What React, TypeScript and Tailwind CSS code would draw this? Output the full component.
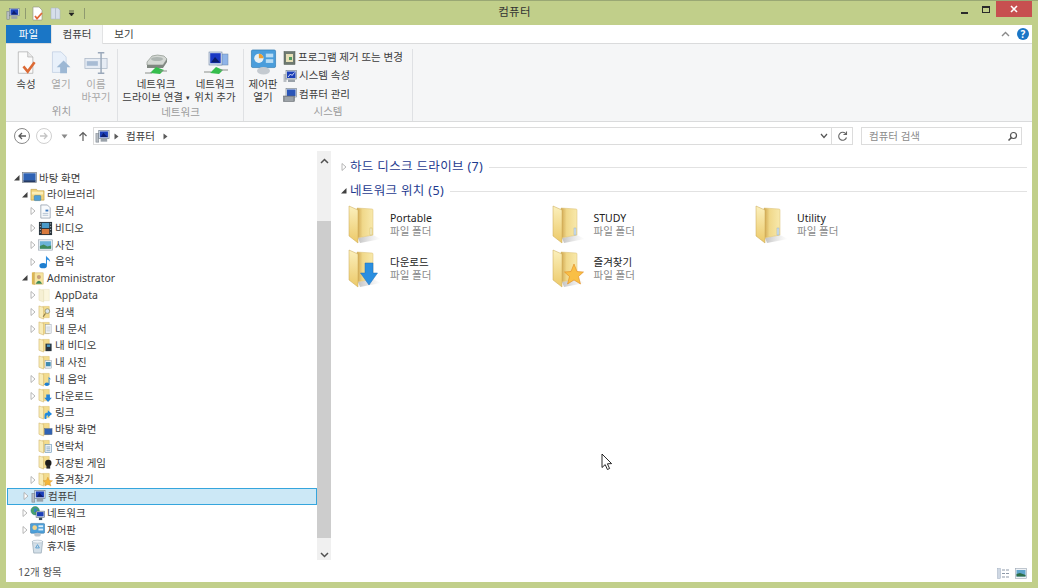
import React from 'react';

const FONT = "font-['Noto_Sans','Noto_Sans_CJK_KR',sans-serif]";

function Pc({ size = 16 }: { size?: number }) {
  return (
    <svg width={size} height={size} viewBox="0 0 16 16">
      <rect x="1" y="5" width="3" height="9" fill="#b9bec4" stroke="#77808a" strokeWidth="0.6" />
      <rect x="4" y="1.5" width="11" height="8.5" fill="#dfe6ee" stroke="#6d7a88" strokeWidth="0.7" />
      <rect x="5.2" y="2.6" width="8.6" height="6.3" fill="#1b3fb8" />
      <path d="M6 8.5 L9 4 L11 6.5 L13.5 8.5Z" fill="#0d1f70" />
      <rect x="6" y="10.5" width="7" height="3" fill="#9aa2aa" />
    </svg>
  );
}

function Desktop() {
  return (
    <svg width="16" height="16" viewBox="0 0 16 16">
      <rect x="0.5" y="2.5" width="15" height="11" fill="#dfe5ec" stroke="#6b7480" strokeWidth="0.7" />
      <rect x="1.5" y="3.5" width="13" height="8" fill="#2f62b4" />
      <rect x="1.5" y="11" width="13" height="1.8" fill="#243a66" />
    </svg>
  );
}

// small yellow folder, optional overlay glyph in the bottom right
function SmallFolder({ children, pale = false }: { children?: React.ReactNode; pale?: boolean }) {
  return (
    <svg width="16" height="16" viewBox="0 0 16 16">
      <path d="M5 1.5 H12 V13.5 H5Z" fill={pale ? '#fbf6de' : '#f3dc8e'} stroke={pale ? '#e8e0c0' : '#d8bb6a'} strokeWidth="0.5" />
      <path d="M1 1 L6 2.5 L6 15 L1 13Z" fill={pale ? '#f6f0d4' : '#f8ecb8'} stroke={pale ? '#e0d8b0' : '#c9a752'} strokeWidth="0.5" />
      {children}
    </svg>
  );
}

function LargeFolder({ children }: { children?: React.ReactNode }) {
  return (
    <svg width="36" height="40" viewBox="0 0 36 40">
      <defs>
        <linearGradient id="fold-back" x1="0" y1="0" x2="1" y2="0">
          <stop offset="0" stopColor="#cfa54e" />
          <stop offset="0.35" stopColor="#f0d88a" />
          <stop offset="1" stopColor="#f8e9ac" />
        </linearGradient>
        <linearGradient id="fold-front" x1="0" y1="0" x2="0" y2="1">
          <stop offset="0" stopColor="#fbf0bd" />
          <stop offset="1" stopColor="#ecc968" />
        </linearGradient>
        <linearGradient id="fold-shadow" x1="0" y1="0" x2="1" y2="0">
          <stop offset="0" stopColor="#a8a8a8" stopOpacity="0.7" />
          <stop offset="1" stopColor="#c8c8c8" stopOpacity="0" />
        </linearGradient>
      </defs>
      <path d="M10 33 L25 30 L33 34 L12 38Z" fill="url(#fold-shadow)" />
      <path d="M9 3 L24 4 Q25 4 25 5 L25 30 L9 33Z" fill="url(#fold-back)" stroke="#d8bd70" strokeWidth="0.5" />
      <path d="M1 1 L10 5 L10 38 L1 31Z" fill="url(#fold-front)" stroke="#c9a752" strokeWidth="0.5" />
      {children}
    </svg>
  );
}

function Expander({ state }: { state: 'open' | 'closed' | 'none' }) {
  if (state === 'none') return <span className="w-[8px] shrink-0" />;
  return (
    <svg width="8" height="10" viewBox="0 0 8 10" className="shrink-0">
      {state === 'open' ? (
        <path d="M6.5 2 V7.5 H1Z" fill="#404040" />
      ) : (
        <path d="M2 1.5 L6 5 L2 8.5Z" fill="#fff" stroke="#a6a6a6" strokeWidth="0.8" />
      )}
    </svg>
  );
}

const smallIcons: Record<string, React.ReactNode> = {
  desktop: <Desktop />,
  library: (
    <svg width="16" height="16" viewBox="0 0 16 16">
      <path d="M1 2.5 H7 L8 4 H15 V14 H1Z" fill="#f0d27a" stroke="#b8953c" strokeWidth="0.6" />
      <rect x="2" y="5" width="12" height="3" fill="#fbeeb8" />
      <rect x="4.5" y="9" width="7" height="5.5" rx="1" fill="#4f9fd8" stroke="#2f75a8" strokeWidth="0.5" />
    </svg>
  ),
  doc: (
    <svg width="16" height="16" viewBox="0 0 16 16">
      <path d="M3 1 H10 L13 4 V15 H3Z" fill="#f8fafc" stroke="#8d99a8" strokeWidth="0.8" />
      <rect x="8" y="6" width="3" height="2" fill="#3a78c0" />
      <path d="M5 10 H11 M5 12 H11" stroke="#9fb0c4" strokeWidth="0.8" />
    </svg>
  ),
  video: (
    <svg width="16" height="16" viewBox="0 0 16 16">
      <rect x="1" y="1" width="14" height="14" fill="#27323a" />
      <rect x="4" y="2" width="8" height="5.5" fill="#4a9ac8" />
      <rect x="4" y="8.5" width="8" height="5.5" fill="#d8793c" />
      <path d="M2 3 H3 M2 6 H3 M2 9 H3 M2 12 H3 M13 3 H14 M13 6 H14 M13 9 H14 M13 12 H14" stroke="#d0d8dc" strokeWidth="1" />
    </svg>
  ),
  photo: (
    <svg width="16" height="16" viewBox="0 0 16 16">
      <rect x="0.5" y="3" width="15" height="11" fill="#eef2f6" stroke="#9aa6b2" strokeWidth="0.7" />
      <rect x="2" y="4.5" width="12" height="8" fill="#6bb2d8" />
      <path d="M2 12.5 V9.5 L6 8 L10 10 L14 9 V12.5Z" fill="#3f8a5a" />
    </svg>
  ),
  music: (
    <svg width="16" height="16" viewBox="0 0 16 16">
      <ellipse cx="5.5" cy="12.5" rx="4" ry="2.8" fill="#1f7fd0" />
      <path d="M8.5 12.5 V1.5 C9.5 4 13 4.5 13 8.5 C12 6.5 10.5 6 9.6 6 V12.5Z" fill="#2c8de0" />
    </svg>
  ),
  admin: (
    <svg width="16" height="16" viewBox="0 0 16 16">
      <path d="M2 1.5 L5 1 V15 L2 14Z" fill="#dcb654" />
      <rect x="5" y="2" width="9" height="12" fill="#f6e5a0" stroke="#c9a752" strokeWidth="0.5" />
      <circle cx="9.5" cy="6.5" r="2.2" fill="#c8a07a" />
      <path d="M6 13.5 Q9.5 7.5 13 13.5Z" fill="#3f8a5a" />
    </svg>
  ),
  appdata: <SmallFolder pale />,
  search: <SmallFolder><circle cx="10" cy="6.5" r="2.5" fill="#dbe6ee" stroke="#8c8c6a" strokeWidth="0.8" /><path d="M8 9 L5.5 12.5" stroke="#8c7a4a" strokeWidth="1.2" /></SmallFolder>,
  mydoc: <SmallFolder><rect x="8" y="4" width="6" height="9" fill="#f4f6f8" stroke="#8d99a8" strokeWidth="0.5" /><path d="M9 6.5 H13 M9 8.5 H13 M9 10.5 H13" stroke="#9fb0c4" strokeWidth="0.6" /></SmallFolder>,
  myvideo: <SmallFolder><rect x="8" y="6" width="6.5" height="8" fill="#27323a" /><rect x="9.5" y="7" width="3.5" height="2.5" fill="#4a9ac8" /></SmallFolder>,
  myphoto: <SmallFolder><rect x="7.5" y="6" width="7" height="8" fill="#eef2f6" stroke="#8d99a8" strokeWidth="0.5" /><rect x="8.5" y="7.5" width="5" height="4.5" fill="#3f8ab0" /></SmallFolder>,
  mymusic: <SmallFolder><ellipse cx="9.5" cy="13" rx="2.5" ry="1.8" fill="#1f7fd0" /><path d="M11.3 13 V5 L14 8 L12.2 7.5 V13Z" fill="#2c8de0" /></SmallFolder>,
  download: <SmallFolder><path d="M8.8 7 H12.7 V10.5 H14.8 L10.7 15 L6.6 10.5 H8.8Z" fill="#2384da" /></SmallFolder>,
  link: <SmallFolder><path d="M7 15 V11 Q7 8 10.5 8 V5.5 L15 9.5 L10.5 13 V10.8 Q9 10.8 9 12 V15Z" fill="#1f8ae0" /></SmallFolder>,
  dtfolder: <SmallFolder><rect x="7" y="7" width="8" height="6.5" fill="#2f62b4" stroke="#5a6a80" strokeWidth="0.5" /></SmallFolder>,
  contact: <SmallFolder><rect x="7.5" y="6" width="7" height="8.5" fill="#eef3f8" stroke="#5a8ab0" strokeWidth="0.6" /><path d="M9 8.5 H13 M9 10.5 H13 M9 12.5 H13" stroke="#5a8ab0" strokeWidth="0.7" /></SmallFolder>,
  game: <SmallFolder><circle cx="11" cy="8.5" r="3.4" fill="#1c1c1c" /><rect x="9" y="11" width="4" height="3.5" fill="#2a2a2a" /></SmallFolder>,
  fav: <SmallFolder><path d="M10.5 5.5 L12 9 L15.5 9.3 L12.8 11.5 L13.8 15 L10.5 13 L7.2 15 L8.2 11.5 L5.5 9.3 L9 9Z" fill="#f5b63a" stroke="#d08a20" strokeWidth="0.4" /></SmallFolder>,
  pc: <Pc />,
  network: (
    <svg width="16" height="16" viewBox="0 0 16 16">
      <circle cx="5.5" cy="5" r="4.5" fill="#48a36a" stroke="#2d7a8c" strokeWidth="0.5" />
      <path d="M3 2.5 Q6 3.5 4 6.5 Q7 7 8 3" fill="#2f7ed0" />
      <rect x="6.5" y="5.5" width="9" height="6.5" fill="#dfe6ee" stroke="#4a5a6a" strokeWidth="0.6" />
      <rect x="7.5" y="6.5" width="7" height="4.5" fill="#1b3fb8" />
      <rect x="9.5" y="12.5" width="3.5" height="2.5" fill="#374a5c" />
    </svg>
  ),
  control: (
    <svg width="16" height="16" viewBox="0 0 16 16">
      <rect x="0.5" y="1.5" width="15" height="10.5" rx="1" fill="#4d9fd8" stroke="#3a78a8" strokeWidth="0.6" />
      <circle cx="5" cy="6" r="2.5" fill="#f2d48a" />
      <rect x="9" y="3.5" width="5" height="2" fill="#d9ecf8" />
      <rect x="9" y="7" width="5" height="2" fill="#d9ecf8" />
      <ellipse cx="8" cy="13.5" rx="3.5" ry="2" fill="#bcc4cc" />
    </svg>
  ),
  trash: (
    <svg width="16" height="16" viewBox="0 0 16 16">
      <path d="M2.5 2.5 H13.5 L12 15 H4Z" fill="#d3dfe8" stroke="#8fa2b0" strokeWidth="0.7" />
      <ellipse cx="8" cy="2.8" rx="5.5" ry="1.6" fill="#eef3f7" stroke="#8fa2b0" strokeWidth="0.5" />
      <path d="M8 6 L10 9.5 H6Z" fill="none" stroke="#5b9fd0" strokeWidth="1" />
    </svg>
  ),
};

const treeRows: { level: number; state: 'open' | 'closed' | 'none'; icon: string; label: string; selected?: boolean }[] = [
  { level: 0, state: 'open', icon: 'desktop', label: '바탕 화면' },
  { level: 1, state: 'open', icon: 'library', label: '라이브러리' },
  { level: 2, state: 'closed', icon: 'doc', label: '문서' },
  { level: 2, state: 'closed', icon: 'video', label: '비디오' },
  { level: 2, state: 'closed', icon: 'photo', label: '사진' },
  { level: 2, state: 'closed', icon: 'music', label: '음악' },
  { level: 1, state: 'open', icon: 'admin', label: 'Administrator' },
  { level: 2, state: 'closed', icon: 'appdata', label: 'AppData' },
  { level: 2, state: 'closed', icon: 'search', label: '검색' },
  { level: 2, state: 'closed', icon: 'mydoc', label: '내 문서' },
  { level: 2, state: 'none', icon: 'myvideo', label: '내 비디오' },
  { level: 2, state: 'none', icon: 'myphoto', label: '내 사진' },
  { level: 2, state: 'closed', icon: 'mymusic', label: '내 음악' },
  { level: 2, state: 'closed', icon: 'download', label: '다운로드' },
  { level: 2, state: 'none', icon: 'link', label: '링크' },
  { level: 2, state: 'none', icon: 'dtfolder', label: '바탕 화면' },
  { level: 2, state: 'none', icon: 'contact', label: '연락처' },
  { level: 2, state: 'none', icon: 'game', label: '저장된 게임' },
  { level: 2, state: 'closed', icon: 'fav', label: '즐겨찾기' },
  { level: 1, state: 'closed', icon: 'pc', label: '컴퓨터', selected: true },
  { level: 1, state: 'closed', icon: 'network', label: '네트워크' },
  { level: 1, state: 'closed', icon: 'control', label: '제어판' },
  { level: 1, state: 'none', icon: 'trash', label: '휴지통' },
];

const indent = ['pl-[7px]', 'pl-[15px]', 'pl-[23px]'];

const folders: { name: string; overlay?: React.ReactNode }[] = [
  { name: 'Portable', overlay: <rect x="22" y="23" width="2" height="7" fill="#f5f0d0" stroke="#c8b050" strokeWidth="0.4" /> },
  { name: 'STUDY', overlay: <rect x="22" y="23" width="2" height="7" fill="#cfe0ee" stroke="#8aa8c0" strokeWidth="0.4" /> },
  { name: 'Utility', overlay: <rect x="22" y="23" width="2" height="7" fill="#cfe0ee" stroke="#8aa8c0" strokeWidth="0.4" /> },
  { name: '다운로드', overlay: <path d="M17 14 H25 V24 H29.5 L21 36 L12.5 24 H17Z" fill="#2a8fe0" stroke="#1e6fb8" strokeWidth="0.5" /> },
  { name: '즐겨찾기', overlay: <path d="M22 15 L25 22.5 L31.5 23 L26.5 27.5 L28.5 35 L22 31 L15.5 35 L17.5 27.5 L12.5 23 L19 22.5Z" fill="#f9bf45" stroke="#e08a20" strokeWidth="0.6" /> },
];

function RibbonBtn({ icon, lines, disabled, w }: { icon: React.ReactNode; lines: string[]; disabled?: boolean; w: string }) {
  return (
    <div className={`flex flex-col items-center ${w}`}>
      <div className="h-[26px] flex items-end justify-center">{icon}</div>
      <div className={`mt-[3px] text-center text-[10.5px] leading-[12.5px] whitespace-nowrap ${disabled ? 'text-[#a8a8a8]' : 'text-[#3c3c3c]'}`}>
        {lines.map((l) => <div key={l}>{l}</div>)}
      </div>
    </div>
  );
}

function Group({ label, w, children }: { label: string; w: string; children: React.ReactNode }) {
  return (
    <div className={`${w} h-full border-r border-[#dfe1e4] flex flex-col`}>
      <div className="flex-1 flex items-start">{children}</div>
      <div className="h-[20px] text-center text-[10.5px] leading-[16px] text-[#9c9c9c]">{label}</div>
    </div>
  );
}

const DriveIcon = (
  <svg width="26" height="21" viewBox="0 0 26 21">
    <path d="M4 8 L9 2 Q14 0 21 2 L24 5 L20 11 H4Z" fill="#d4d8d4" stroke="#7f8a80" strokeWidth="0.6" />
    <ellipse cx="14" cy="5" rx="6" ry="2" fill="#aeb6b2" />
    <path d="M4 11 H20 L24 5 V8 L20 14 H4Z" fill="#7f8780" />
    <path d="M7 19 L13 13 L21 16 L17 20Z" fill="#35bd4c" />
    <path d="M2 19 H9 M17 17 H24" stroke="#8a8f8a" strokeWidth="1" />
  </svg>
);

const NetIcon = (
  <svg width="27" height="24" viewBox="0 0 27 24">
    <rect x="15" y="3" width="11" height="11" fill="#8fb4e8" stroke="#6c88a8" strokeWidth="0.5" />
    <rect x="7" y="1" width="13" height="13" fill="#d8e2f0" stroke="#5c7696" strokeWidth="0.5" />
    <rect x="8.2" y="2.2" width="10.5" height="10" fill="#1a38c4" />
    <path d="M9 11.5 L13 6 L18 11.5Z" fill="#0b1c6a" />
    <path d="M8 22 L14 16 L21 19 L17 23Z" fill="#35bd4c" />
    <path d="M2 21 H9 M18 19 H26" stroke="#8a8f8a" strokeWidth="1" />
  </svg>
);

const MiniSys = [
  {
    label: '프로그램 제거 또는 변경',
    icon: (
      <svg width="13" height="14" viewBox="0 0 13 14">
        <rect x="1" y="0.5" width="11" height="13" fill="#6e7a70" stroke="#505a54" strokeWidth="0.5" />
        <rect x="3" y="3" width="7" height="8" fill="#e6dfb6" />
        <rect x="6" y="6" width="3" height="3" fill="#4f9a60" />
      </svg>
    ),
  },
  {
    label: '시스템 속성',
    icon: (
      <svg width="14" height="14" viewBox="0 0 14 14">
        <rect x="0.5" y="5" width="3" height="8" fill="#b9bec4" />
        <rect x="3" y="1.5" width="10.5" height="8.5" fill="#dfe6ee" stroke="#6d7a88" strokeWidth="0.6" />
        <rect x="4" y="2.5" width="8.5" height="6.5" fill="#1b3fb8" />
        <path d="M5 8 L7.5 5 L9 6.5 L11.5 3.5" stroke="#ffffff" strokeWidth="0.8" fill="none" />
        <rect x="5" y="10.5" width="7" height="2.5" fill="#9aa2aa" />
      </svg>
    ),
  },
  {
    label: '컴퓨터 관리',
    icon: (
      <svg width="14" height="14" viewBox="0 0 14 14">
        <rect x="3" y="0.5" width="10.5" height="8.5" fill="#dfe6ee" stroke="#6d7a88" strokeWidth="0.6" />
        <rect x="4" y="1.5" width="8.5" height="6.5" fill="#2a55b8" />
        <rect x="0.5" y="8" width="11" height="5.5" fill="#8c9298" stroke="#5c6268" strokeWidth="0.5" />
        <path d="M2 10 H10 M2 12 H10" stroke="#c8ccd0" strokeWidth="0.6" />
      </svg>
    ),
  },
];

export default function App() {
  return (
    <div className={`${FONT} relative w-[1038px] h-[588px] bg-[#c1cf8a] border-t border-[#9aa874] overflow-hidden flex flex-col text-[#3c3c3c]`}>
      {/* title bar */}
      <div className="h-[24px] flex items-start pl-[6px] pr-[6px] shrink-0">
        <div className="flex items-center gap-[5px] h-[24px] pt-[1px]">
          <Pc size={14} />
          <span className="w-px h-[11px] bg-[#8f9a70]" />
          <svg width="13" height="15" viewBox="0 0 13 15">
            <path d="M2 1 H8 L11 4 V14 H2Z" fill="#fff" stroke="#8d8d80" strokeWidth="0.6" />
            <path d="M4 10 L6 12.5 L11 7" stroke="#e0683a" strokeWidth="1.8" fill="none" />
          </svg>
          <svg width="11" height="13" viewBox="0 0 11 13" className="ml-[1px]">
            <path d="M1 1 H8 L10 3 V12 H1Z" fill="#d6deea" stroke="#a6b0bf" strokeWidth="0.5" />
            <rect x="5" y="1" width="1" height="11" fill="#b6c0d0" />
          </svg>
          <svg width="7" height="7" viewBox="0 0 7 7" className="ml-[2px]">
            <path d="M1 1 H6 M1 3 H6 L3.5 6Z" fill="#222" stroke="#222" strokeWidth="0.6" />
          </svg>
          <span className="w-px h-[11px] bg-[#8f9a70] ml-[4px]" />
        </div>
        <div className="flex-1 text-center text-[11.5px] leading-[22px] tracking-[0.3px] text-[#333] pr-[10px]">컴퓨터</div>
        <div className="flex items-start">
          <div className="w-[21px] h-[16px] flex items-center justify-center pt-[4px]"><span className="w-[7px] h-[2px] bg-[#2a2a2a] mt-[3px]" /></div>
          <div className="w-[21px] h-[16px] flex items-center justify-center"><span className="w-[8px] h-[7px] border border-[#2a2a2a] border-t-2" /></div>
          <div className="w-[36px] h-[16px] bg-[#c75050] flex items-center justify-center">
            <svg width="8" height="8" viewBox="0 0 8 8"><path d="M1 1 L7 7 M7 1 L1 7" stroke="#fff" strokeWidth="1.6" /></svg>
          </div>
        </div>
      </div>

      {/* window body */}
      <div className="flex-1 mx-[6px] mb-[6px] bg-white flex flex-col min-h-0">
        {/* tabs */}
        <div className="h-[19px] flex items-stretch shrink-0 text-[10.5px] border-b border-[#dadbdc]">
          <div className="w-[45px] bg-[#1a76c6] text-white text-center leading-[18px]">파일</div>
          <div className="w-[52px] h-[19px] bg-[#f5f6f7] border-x border-[#e2e3e4] text-center leading-[18px]">컴퓨터</div>
          <div className="w-[42px] text-center leading-[18px]">보기</div>
          <div className="flex-1" />
          <div className="flex items-center gap-[7px] pr-[3px]">
            <svg width="9" height="6" viewBox="0 0 9 6"><path d="M1 5 L4.5 1.5 L8 5" stroke="#8a8a8a" strokeWidth="1.4" fill="none" /></svg>
            <div className="w-[12px] h-[12px] rounded-full bg-[#1a76c6] text-white text-[10px] font-bold leading-[12px] text-center">?</div>
          </div>
        </div>

        {/* ribbon */}
        <div className="h-[78px] bg-[#f5f6f7] border-b border-[#dadbdc] flex shrink-0 pt-[5px]">
          <Group label="위치" w="w-[112px]">
            <RibbonBtn w="w-[40px]" lines={['속성']} icon={
              <svg width="22" height="24" viewBox="0 0 24 28">
                <path d="M3 1 H14 L20 7 V26 H3Z" fill="#fbfbfb" stroke="#9a9a9a" strokeWidth="0.7" />
                <path d="M14 1 V7 H20" fill="#e8e8e8" stroke="#9a9a9a" strokeWidth="0.6" />
                <path d="M9 18 L14 24 L22 13" stroke="#dc6a35" strokeWidth="3" fill="none" />
              </svg>
            } />
            <RibbonBtn w="w-[30px]" disabled lines={['열기']} icon={
              <svg width="22" height="24" viewBox="0 0 24 28">
                <path d="M2 1 H12 L18 7 V25 H2Z" fill="#e8f0fa" stroke="#b4c4dc" strokeWidth="0.7" />
                <path d="M15 11 L23 19 H19 V26 H11 V19 H7Z" fill="#9db8d4" />
              </svg>
            } />
            <RibbonBtn w="w-[40px]" disabled lines={['이름', '바꾸기']} icon={
              <svg width="24" height="24" viewBox="0 0 26 26">
                <rect x="1" y="8" width="24" height="11" fill="#e6ecf4" stroke="#aab6c6" strokeWidth="0.8" />
                <rect x="3" y="11" width="12" height="5" fill="#a8bcd4" />
                <path d="M15 2 H22 M18.5 2 V24 M15 24 H22" stroke="#9aa8ba" strokeWidth="1.6" />
              </svg>
            } />
          </Group>
          <Group label="네트워크" w="w-[126px]">
            <div className="w-[5px]" />
            <div className="flex flex-col items-center w-[66px]">
              <div className="h-[26px] flex items-end">{DriveIcon}</div>
              <div className="mt-[3px] text-center text-[10.5px] leading-[12.5px] whitespace-nowrap">
                <div>네트워크</div>
                <div>드라이브 연결 <span className="text-[7px] align-[1px]">▾</span></div>
              </div>
            </div>
            <div className="w-[4px]" />
            <RibbonBtn w="w-[44px]" lines={['네트워크', '위치 추가']} icon={NetIcon} />
          </Group>
          <Group label="시스템" w="w-[169px]">
            <RibbonBtn w="w-[38px]" lines={['제어판', '열기']} icon={
              <svg width="27" height="26" viewBox="0 0 28 28">
                <rect x="1" y="1" width="26" height="19" rx="1.5" fill="#4a9ddb" stroke="#2f78b0" strokeWidth="0.7" />
                <circle cx="9" cy="10" r="5" fill="#e8f0f4" />
                <path d="M9 10 V5 A5 5 0 0 1 14 10Z" fill="#f0a030" />
                <rect x="16.5" y="5" width="8" height="4" fill="#b8dcf4" />
                <rect x="16.5" y="11" width="8" height="4" fill="#b8dcf4" />
                <ellipse cx="14" cy="23.5" rx="7" ry="4" fill="#c4cad0" />
              </svg>
            } />
            <div className="flex flex-col gap-[3.5px] mt-[1px] pl-[1px]">
              {MiniSys.map((m) => (
                <div key={m.label} className="h-[15px] flex items-center gap-[2px] text-[10.5px] whitespace-nowrap">
                  {m.icon}
                  <span>{m.label}</span>
                </div>
              ))}
            </div>
          </Group>
        </div>

        {/* address row */}
        <div className="h-[29px] flex items-center shrink-0 border-b border-transparent">
          <div className="w-[87px] flex items-center pl-[8px] shrink-0">
            <div className="w-[16px] h-[16px] rounded-full border border-[#8a8a8a] flex items-center justify-center">
              <svg width="10" height="10" viewBox="0 0 10 10"><path d="M9 5 H2 M5 2 L2 5 L5 8" stroke="#5a5a5a" strokeWidth="1.3" fill="none" /></svg>
            </div>
            <div className="w-[16px] h-[16px] rounded-full border border-[#d0d0d0] flex items-center justify-center ml-[6px]">
              <svg width="10" height="10" viewBox="0 0 10 10"><path d="M1 5 H8 M5 2 L8 5 L5 8" stroke="#c4c4c4" strokeWidth="1.3" fill="none" /></svg>
            </div>
            <svg width="7" height="5" viewBox="0 0 7 5" className="ml-[9px]"><path d="M0.5 0.5 H6.5 L3.5 4.5Z" fill="#8a8a8a" /></svg>
            <svg width="10" height="11" viewBox="0 0 10 11" className="ml-[10px]"><path d="M5 10 V2 M1.5 5 L5 1.5 L8.5 5" stroke="#5e5e5e" strokeWidth="1.2" fill="none" /></svg>
          </div>
          <div className="w-[760px] h-[18px] border border-[#dcdcdc] flex items-center pl-[1px] shrink-0">
            <Pc size={15} />
            <svg width="5" height="7" viewBox="0 0 5 7" className="ml-[4px]"><path d="M0.5 0.5 L4.5 3.5 L0.5 6.5Z" fill="#5a5a5a" /></svg>
            <span className="ml-[7px] text-[10.5px] leading-none">컴퓨터</span>
            <svg width="5" height="7" viewBox="0 0 5 7" className="ml-[8px]"><path d="M0.5 0.5 L4.5 3.5 L0.5 6.5Z" fill="#5a5a5a" /></svg>
            <div className="flex-1" />
            <svg width="8" height="6" viewBox="0 0 8 6" className="mr-[3px]"><path d="M1 1 L4 4.5 L7 1" stroke="#555" strokeWidth="1.2" fill="none" /></svg>
            <span className="w-px h-full bg-[#dcdcdc]" />
            <div className="w-[20px] flex items-center justify-center">
              <svg width="11" height="11" viewBox="0 0 11 11"><path d="M9 3 A4 4 0 1 0 9.5 6.5 M9.5 0.5 V3.5 H6.5" stroke="#666" strokeWidth="1.1" fill="none" /></svg>
            </div>
          </div>
          <div className="w-[8px] shrink-0" />
          <div className="w-[161px] h-[18px] border border-[#dcdcdc] flex items-center pl-[7px] pr-[3px] shrink-0">
            <span className="text-[10.5px] leading-none text-[#8c8c8c] flex-1">컴퓨터 검색</span>
            <svg width="11" height="11" viewBox="0 0 11 11"><circle cx="6.5" cy="4.5" r="3" fill="none" stroke="#555" strokeWidth="1.2" /><path d="M4.5 6.5 L1.5 9.5" stroke="#555" strokeWidth="1.6" /></svg>
          </div>
        </div>

        {/* main */}
        <div className="flex-1 flex min-h-0">
          {/* tree */}
          <div className="w-[311px] pt-[18.5px] shrink-0 text-[10.5px]">
            {treeRows.map((r, i) => (
              <div
                key={i}
                className={`h-[16.78px] flex items-center whitespace-nowrap box-border ${indent[r.level]} ${r.selected ? 'bg-[#cce8f6] border border-[#35a5dd] ml-[1px] !pl-[14px]' : ''}`}
              >
                <Expander state={r.state} />
                <span className="ml-[1px] w-[16px] h-[16px] flex items-center shrink-0 [&_svg]:w-[15px] [&_svg]:h-[15px]">{smallIcons[r.icon]}</span>
                <span className="ml-[1px] leading-none">{r.label}</span>
              </div>
            ))}
          </div>

          {/* scrollbar */}
          <div className="w-[14px] shrink-0 bg-[#f0f0f0] flex flex-col">
            <div className="h-[16px] flex items-end justify-center pb-[3px]"><svg width="9" height="6" viewBox="0 0 9 6"><path d="M1 5 L4.5 1.5 L8 5" stroke="#505050" strokeWidth="1.5" fill="none" /></svg></div>
            <div className="h-[54px]" />
            <div className="h-[317px] bg-[#cdcdcd]" />
            <div className="flex-1 flex items-end justify-center pb-[2px]"><svg width="9" height="6" viewBox="0 0 9 6"><path d="M1 1 L4.5 4.5 L8 1" stroke="#505050" strokeWidth="1.5" fill="none" /></svg></div>
          </div>

          {/* content */}
          <div className="flex-1 pl-[9px] pr-[5px] pt-[4px] min-w-0">
            <div className="h-[24px] flex items-center text-[12.5px] tracking-[0.35px] text-[#1e3a8f]">
              <Expander state="closed" />
              <span className="ml-[2px] whitespace-nowrap">하드 디스크 드라이브 (7)</span>
              <span className="flex-1 h-px bg-[#e2e2e2] ml-[6px]" />
            </div>
            <div className="h-[24px] flex items-center text-[12.5px] tracking-[0.35px] text-[#1e3a8f]">
              <Expander state="open" />
              <span className="ml-[2px] whitespace-nowrap">네트워크 위치 (5)</span>
              <span className="flex-1 h-px bg-[#e2e2e2] ml-[6px]" />
            </div>
            <div className="grid grid-cols-[203.5px_203.5px_203.5px] auto-rows-[44px] pl-[8px]">
              {folders.map((f) => (
                <div key={f.name} className="flex items-center">
                  <LargeFolder>{f.overlay}</LargeFolder>
                  <div className="ml-[6px] -mt-[1px]">
                    <div className="text-[10.5px] leading-[12.5px] text-[#222]">{f.name}</div>
                    <div className="text-[10.5px] leading-[12.5px] text-[#8a8a8a]">파일 폴더</div>
                  </div>
                </div>
              ))}
            </div>
          </div>
        </div>

        {/* status bar */}
        <div className="h-[22px] shrink-0 flex items-center pl-[12px] pr-[5px] pt-[4px] text-[10.5px] text-[#555]">
          <span>12개 항목</span>
          <div className="flex-1" />
          <svg width="13" height="11" viewBox="0 0 13 11" className="mr-[5px]">
            <rect x="0.5" y="0.5" width="3" height="10" fill="#cfd8e4" stroke="#a0aec0" strokeWidth="0.5" />
            <path d="M5 2 H12 M5 5.5 H12 M5 9 H12" stroke="#8d99a8" strokeWidth="1" strokeDasharray="3 1" />
          </svg>
          <svg width="12" height="11" viewBox="0 0 12 11">
            <rect x="0.5" y="0.5" width="11" height="10" fill="#eef2f6" stroke="#9aa6b2" strokeWidth="0.6" />
            <rect x="1.5" y="2" width="9" height="6.5" fill="#5fa5cc" />
            <path d="M1.5 8.5 V6 L5 5 L10.5 7 V8.5Z" fill="#2f6f48" />
          </svg>
        </div>
      </div>

      {/* mouse pointer over the window */}
      <svg width="12" height="18" viewBox="0 0 12 18" className="absolute left-[601px] top-[452px]">
        <path d="M1 1 V14.5 L4.2 11.6 L6.4 16.5 L8.6 15.5 L6.4 10.8 L10.6 10.6Z" fill="#fff" stroke="#111" strokeWidth="0.9" />
      </svg>
    </div>
  );
}
